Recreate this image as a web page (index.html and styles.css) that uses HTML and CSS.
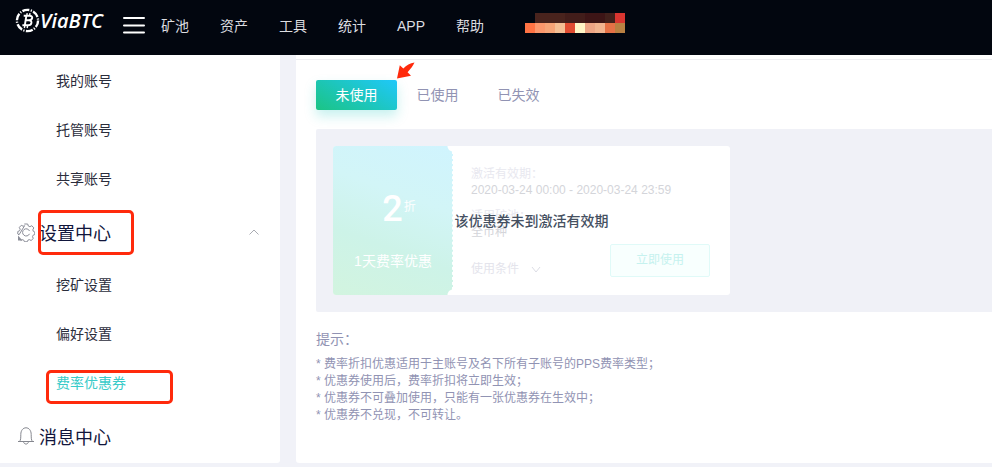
FILE: index.html
```html
<!DOCTYPE html>
<html lang="zh-CN">
<head>
    <meta charset="UTF-8">
    <meta name="viewport" content="width=device-width, initial-scale=1.0">
    <title>费率优惠券 - ViaBTC</title>
    <link rel="stylesheet" href="styles.css">
</head>
<body>
    <header class="header">
      <a class="logo" href="#">
        <svg width="25" height="25" viewBox="0 0 25 25" fill="none" stroke="#fff">
          <circle cx="12.5" cy="12.5" r="10.6" stroke-width="2.4" stroke-dasharray="7.1 1.4 1.2 1.4"/>
          <g stroke-width="1.9">
            <path d="M11.5 7 9.7 18M8.7 7.8h6c3.6 0 3.3 4.2-.6 4.5h-3.2M14 12.3c3.8.3 3 5-.9 5H7.4"/>
            <path d="M12.2 5.2l-.4 2.4M15 5.2l-.4 2.6M9.8 17.5l-.4 2.6M12.6 17.5l-.4 2.6" stroke-width="1.4"/>
          </g>
        </svg>
        <span class="logo-text">ViaBTC</span>
      </a>
      <button class="menu-btn" type="button" aria-label="菜单">
        <svg width="22" height="18" viewBox="0 0 22 18" stroke="#fff" stroke-width="2" stroke-linecap="round">
          <path d="M1 2h20M1 9.500h20M1 16.500h20"/>
        </svg>
      </button>
      <nav class="nav">
        <a href="#">矿池</a>
        <a href="#">资产</a>
        <a href="#">工具</a>
        <a href="#">统计</a>
        <a href="#">APP</a>
        <a href="#">帮助</a>
      </nav>
      <svg class="mosaic" width="100" height="20" viewBox="0 0 100 20" shape-rendering="crispEdges">
        <rect x="10" width="30" height="10" fill="#49231d"/>
        <rect x="40" width="20" height="10" fill="#421d1a"/>
        <rect x="60" width="20" height="10" fill="#3d1516"/>
        <rect x="80" width="10" height="10" fill="#42201b"/>
        <rect x="90" width="10" height="10" fill="#d93530"/>
        <rect y="10" width="10" height="10" fill="#ff7344"/>
        <rect x="10" y="10" width="10" height="10" fill="#fb976c"/>
        <rect x="20" y="10" width="10" height="10" fill="#f6a477"/>
        <rect x="30" y="10" width="10" height="10" fill="#f4bf94"/>
        <rect x="40" y="10" width="10" height="10" fill="#e04c31"/>
        <rect x="50" y="10" width="10" height="10" fill="#fff6c6"/>
        <rect x="60" y="10" width="10" height="10" fill="#eda585"/>
        <rect x="70" y="10" width="10" height="10" fill="#f1b48f"/>
        <rect x="80" y="10" width="10" height="10" fill="#e57146"/>
        <rect x="90" y="10" width="10" height="10" fill="#b98042"/>
      </svg>
    </header>

    <div class="page">
      <aside class="sidebar">
        <a class="item" href="#">我的账号</a>
        <a class="item" href="#">托管账号</a>
        <a class="item" href="#">共享账号</a>
        <a class="group" href="#">
          <svg width="18" height="20" viewBox="0 0 18 20" fill="none" stroke="#8b8d98">
            <path d="M7.300 2h3.400l.6 2 1.600.7 1.900-1 2 2.200-1 1.900.5 1.500 1.500.7v2.500l-1.700.7-.6 1.500.8 1.800-2.200 2-1.800-.9-1.400.6-.7 1.600H7.500l-.7-1.600-1.500-.6-1.600.9M2 12.800.8 12V9.500l1.700-.7.7-1.500-.9-1.900 2-2.100 1.900.9 1.400-.5z"/>
            <path d="M12.500 11.800a3.600 3.600 0 1 1 0-2.800"/>
            <path d="M1 13.500 5.500 18.500H1z" fill="#8b8d98" stroke="none"/>
          </svg>
          <span>设置中心</span>
          <svg class="arrow-up" width="10" height="6" viewBox="0 0 10 6" fill="none" stroke="#a9abb2"><path d="M.5 5.500 5 1l4.500 4.500"/></svg>
          <i class="mark mark-group"></i>
        </a>
        <a class="item" href="#">挖矿设置</a>
        <a class="item" href="#">偏好设置</a>
        <a class="item active" href="#">费率优惠券<i class="mark mark-item"></i></a>
        <a class="group" href="#">
          <svg width="18" height="20" viewBox="0 0 18 20" fill="none" stroke="#85878f">
            <path d="M1 15.500h16M2.500 15.500C3.800 14 3.800 12 3.800 8.500 3.800 4.500 6 1.800 9 1.800s5.200 2.700 5.200 6.700c0 3.500 0 5.500 1.300 7M6.500 15.500c.3 3.400 4.700 3.400 5 0"/>
          </svg>
          <span>消息中心</span>
        </a>
      </aside>

      <main class="main">
        <div class="tabs">
          <button class="tab tab-on" type="button">未使用
            <svg class="pointer" width="19" height="19" viewBox="0 0 19 19" fill="#ff2a0c"><path d="M1 17.500 3.800 4.200 7.300 7.400C10.500 4.500 14 2.200 18.500 1.500 17 4.800 14.500 8 11.600 11.200L15 14.700z"/></svg>
          </button>
          <button class="tab" type="button">已使用</button>
          <button class="tab" type="button">已失效</button>
        </div>

        <section class="coupons">
          <div class="coupon">
            <div class="coupon-left">
              <div class="discount"><b>2</b><span>折</span></div>
              <div class="coupon-name">1天费率优惠</div>
            </div>
            <div class="coupon-right">
              <div class="label">激活有效期：</div>
              <div class="value">2020-03-24 00:00 - 2020-03-24 23:59</div>
              <div class="label label-pool">适用矿池：</div>
              <div class="value">全币种</div>
              <div class="coupon-foot">
                <a class="terms" href="#">使用条件
                  <svg width="10" height="8" viewBox="0 0 10 8" fill="none" stroke="#dcdde5"><path d="M1 1l4 5 4-5"/></svg>
                </a>
                <button class="use-btn" type="button">立即使用</button>
              </div>
            </div>
            <div class="coupon-mask">该优惠券未到激活有效期</div>
          </div>
        </section>

        <section class="tips">
          <h2>提示：</h2>
          <p>* 费率折扣优惠适用于主账号及名下所有子账号的PPS费率类型；</p>
          <p>* 优惠券使用后，费率折扣将立即生效；</p>
          <p>* 优惠券不可叠加使用，只能有一张优惠券在生效中；</p>
          <p>* 优惠券不兑现，不可转让。</p>
        </section>
      </main>
    </div>
</body>
</html>
```
FILE: styles.css
```css
* {
    box-sizing: border-box;
}
body {
    margin: 0;
    background: #fff;
    color: #2b2d3c;
    font-family: "Liberation Sans", "Noto Sans CJK SC", sans-serif;
    font-size: 14px;
}
a {
    color: inherit;
    text-decoration: none;
}
button {
    padding: 0;
    border: 0;
    background: none;
    color: inherit;
    font: inherit;
}

/* header */
.header {
    display: flex;
    align-items: flex-start;
    height: 55px;
    padding-left: 15px;
    background: #02060f;
    color: #dcdde0;
}
.logo {
    display: flex;
    align-items: center;
    width: 108px;
    height: 41px;
    color: #fff;
}
.logo-text {
    font-family: "Open Sans", sans-serif;
    font-size: 20px;
    font-style: italic;
    font-weight: 600;
}
.menu-btn {
    display: flex;
    margin: 16px 16px 0 0;
}
.nav {
    display: flex;
    gap: 31px;
    line-height: 52px;
}
.mosaic {
    margin: 13px 0 0 41px;
}

/* layout */
.page {
    display: flex;
    gap: 16px;
    padding-bottom: 4px;
    background: #f1f2f8;
}
.sidebar {
    flex: none;
    width: 280px;
    padding: 2px 0;
    background: #fff;
    border-radius: 0 0 3px 0;
}
.main {
    flex: 1;
    padding: 4px 0 0 20px;
    background: linear-gradient(#fff 4px, #eeeef2 4px, #eeeef2 5px, #fff 5px);
    border-radius: 0 0 0 3px;
}

/* sidebar */
.item {
    position: relative;
    display: block;
    padding-left: 56px;
    line-height: 49px;
}
.active {
    color: #3acbc9;
}
.group {
    position: relative;
    display: flex;
    align-items: center;
    gap: 4px;
    height: 49px;
    margin: 4px 0;
    padding: 0 21px 2px 17px;
    color: #11163c;
    font-size: 18px;
}
.group:last-child {
    margin-bottom: 0;
}
.arrow-up {
    margin-left: auto;
}
.mark {
    position: absolute;
    border: 3px solid #ff2a0c;
    border-radius: 5px;
}
.mark-group {
    top: 2px;
    left: 38px;
    width: 96px;
    height: 45px;
}
.mark-item {
    top: 11px;
    left: 46px;
    width: 127px;
    height: 34px;
}

/* tabs */
.tabs {
    display: flex;
    padding: 21px 0 19px;
}
.tab {
    position: relative;
    width: 81px;
    height: 30px;
    padding-bottom: 2px;
    color: #9193b3;
}
.tab-on {
    border-radius: 2px;
    background: linear-gradient(30deg, #1bc484, #1fc8fa);
    box-shadow: 0 6px 12px rgba(30, 200, 190, 0.25);
    color: #fff;
}
.pointer {
    position: absolute;
    top: -19px;
    right: -18px;
}

/* coupon */
.coupons {
    padding: 17px;
    background: #f0f1f7;
    border-radius: 2px 0 0 2px;
}
.coupon {
    position: relative;
    display: flex;
    width: 397px;
    max-width: 100%;
    background: #fff;
    border-radius: 3px;
    overflow: hidden;
}
.coupon-left {
    position: relative;
    width: 120px;
    padding-top: 41px;
    background: linear-gradient(20deg, #d2f4df, #cdf3e8 35%, #d2f5f7 65%, #d0f4fe);
    color: #fff;
    text-align: center;
}
/* perforated edge with a notch at each end */
.coupon-left::before {
    content: "";
    position: absolute;
    top: 0;
    right: 0;
    bottom: 0;
    border-right: 1px dashed #fff;
}
.coupon-left::after {
    content: "";
    position: absolute;
    inset: 0;
    background:
        radial-gradient(circle at 100% 0, #fff 5px, transparent 6px),
        radial-gradient(circle at 100% 100%, #fff 5px, transparent 6px);
}
.discount {
    display: flex;
    justify-content: center;
    gap: 1px;
    padding-left: 12px;
    height: 64px;
}
.discount b {
    font-family: Roboto, sans-serif;
    font-size: 36px;
    font-weight: 500;
    line-height: 44px;
}
.discount span {
    font-size: 12px;
    line-height: 40px;
}
.coupon-name {
    line-height: 20px;
}
.coupon-right {
    flex: 1;
    padding: 20px 20px 18px 18px;
    font-size: 12px;
    line-height: 16px;
}
.label {
    color: #e8e8ef;
}
.label-pool {
    margin-top: 10px;
}
.value {
    color: #d4d5da;
}
.coupon-foot {
    display: flex;
    align-items: flex-end;
    justify-content: space-between;
    margin-top: 4px;
}
.terms {
    display: flex;
    align-items: center;
    gap: 12px;
    color: #e4e4ec;
    line-height: 15px;
}
.use-btn {
    width: 100px;
    height: 33px;
    padding-bottom: 2px;
    border: 1px solid #e0faf8;
    border-radius: 2px;
    background: #f8fffe;
    color: #c6f2ef;
}
.coupon-mask {
    position: absolute;
    inset: 0;
    display: flex;
    align-items: center;
    justify-content: center;
    padding-bottom: 2px;
    color: #455061;
    font-weight: 500;
}

/* tips */
.tips {
    padding: 17px 0 39px;
    color: #9193b3;
    font-size: 12px;
    line-height: 17px;
}
.tips h2 {
    margin: 0 0 7px;
    font-size: 14px;
    font-weight: 400;
    line-height: 20px;
}
.tips p {
    margin: 0;
}
```
